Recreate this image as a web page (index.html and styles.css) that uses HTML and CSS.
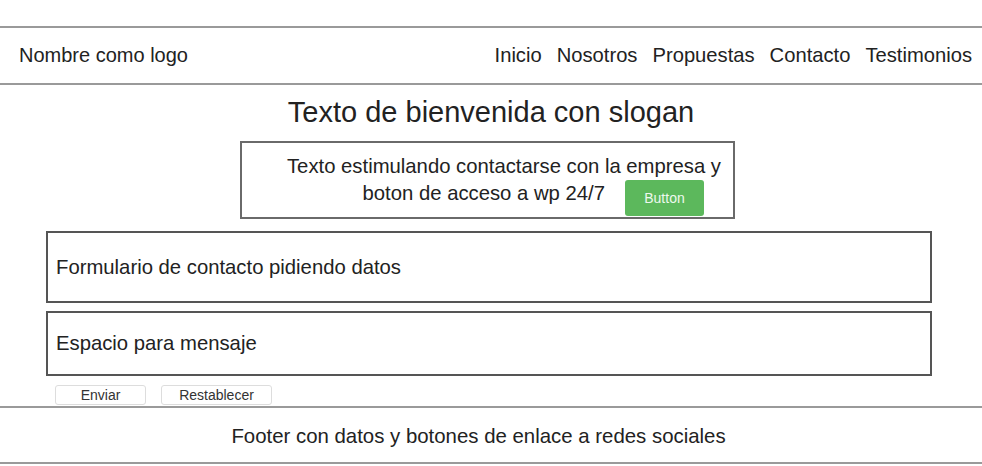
FILE: index.html
```html
<!DOCTYPE html>
<html lang="es">
<head>
<meta charset="utf-8">
<title>Wireframe</title>
<link rel="stylesheet" href="styles.css">
</head>
<body>
<header class="site-header">
  <div class="logo">Nombre como logo</div>
  <nav class="nav">
    <a href="#">Inicio</a>
    <a href="#">Nosotros</a>
    <a href="#">Propuestas</a>
    <a href="#">Contacto</a>
    <a href="#">Testimonios</a>
  </nav>
</header>
<main class="main">
  <h1 class="welcome">Texto de bienvenida con slogan</h1>
  <section class="cta">
    <p class="cta-line">Texto estimulando contactarse con la empresa y</p>
    <div class="cta-row">
      <span class="cta-line">boton de acceso a wp 24/7</span>
      <button class="btn-green" type="button">Button</button>
    </div>
  </section>
  <form class="form">
    <div class="field field-data">Formulario de contacto pidiendo datos</div>
    <div class="field field-msg">Espacio para mensaje</div>
    <div class="actions">
      <button class="btn" type="submit">Enviar</button>
      <button class="btn btn-reset" type="reset">Restablecer</button>
    </div>
  </form>
</main>
<footer class="site-footer">Footer con datos y botones de enlace a redes sociales</footer>
</body>
</html>
```
FILE: styles.css
```css
* { box-sizing: border-box; }
html, body { margin: 0; padding: 0; background: #fff; }
body {
  font-family: "Liberation Sans", Arial, sans-serif;
  color: #222;
  font-size: 20px;
  padding-top: 26px;
}
.site-header {
  display: flex;
  align-items: center;
  justify-content: space-between;
  height: 59px;
  border-top: 2px solid #9a9a9a;
  border-bottom: 2px solid #9a9a9a;
  padding: 0 10px 0 19px;
}
.logo { font-size: 20px; }
.nav { display: flex; gap: 15px; }
.nav a { color: #222; text-decoration: none; font-size: 20.2px; }
.main { display: flex; flex-direction: column; align-items: center; }
.welcome {
  font-size: 29px;
  font-weight: normal;
  margin: 11px 0 0;
  line-height: 33px;
}
.cta {
  width: 495px;
  height: 78px;
  margin-top: 12px;
  margin-right: 7px;
  border: 2px solid #6a6a6a;
  padding: 10px 12px 0 0;
  display: flex;
  flex-direction: column;
  align-items: flex-end;
}
.cta-line { margin: 0; line-height: 27px; font-size: 20.3px; }
.cta-row { display: flex; align-items: flex-start; gap: 20px; padding-right: 17px; }
.btn-green {
  width: 79px;
  height: 36px;
  background: #5cb85c;
  color: #eef8ee;
  border: none;
  border-radius: 3px;
  font-family: "Liberation Sans", Arial, sans-serif;
  font-size: 14px;
}
.form {
  align-self: stretch;
  padding: 0 50px 0 46px;
  margin-top: 12px;
  display: flex;
  flex-direction: column;
  font-size: 20.3px;
}
.field {
  border: 2px solid #555;
  padding: 0 8px;
  display: flex;
  align-items: center;
}
.field-data { height: 72px; }
.field-msg { height: 65px; margin-top: 8px; }
.actions { display: flex; gap: 15px; padding-left: 9px; margin-top: 9px; }
.btn {
  width: 91px;
  height: 20px;
  background: #fff;
  border: 1px solid #ddd;
  border-radius: 3px;
  font-family: "Liberation Sans", Arial, sans-serif;
  font-size: 14px;
  color: #333;
  padding: 0;
}
.btn-reset { width: 111px; }
.site-footer {
  margin-top: 1px;
  height: 58px;
  border-top: 2px solid #9a9a9a;
  border-bottom: 2px solid #9a9a9a;
  display: flex;
  align-items: center;
  justify-content: center;
  padding: 2px 25px 0 0;
  font-size: 20.4px;
}
```
